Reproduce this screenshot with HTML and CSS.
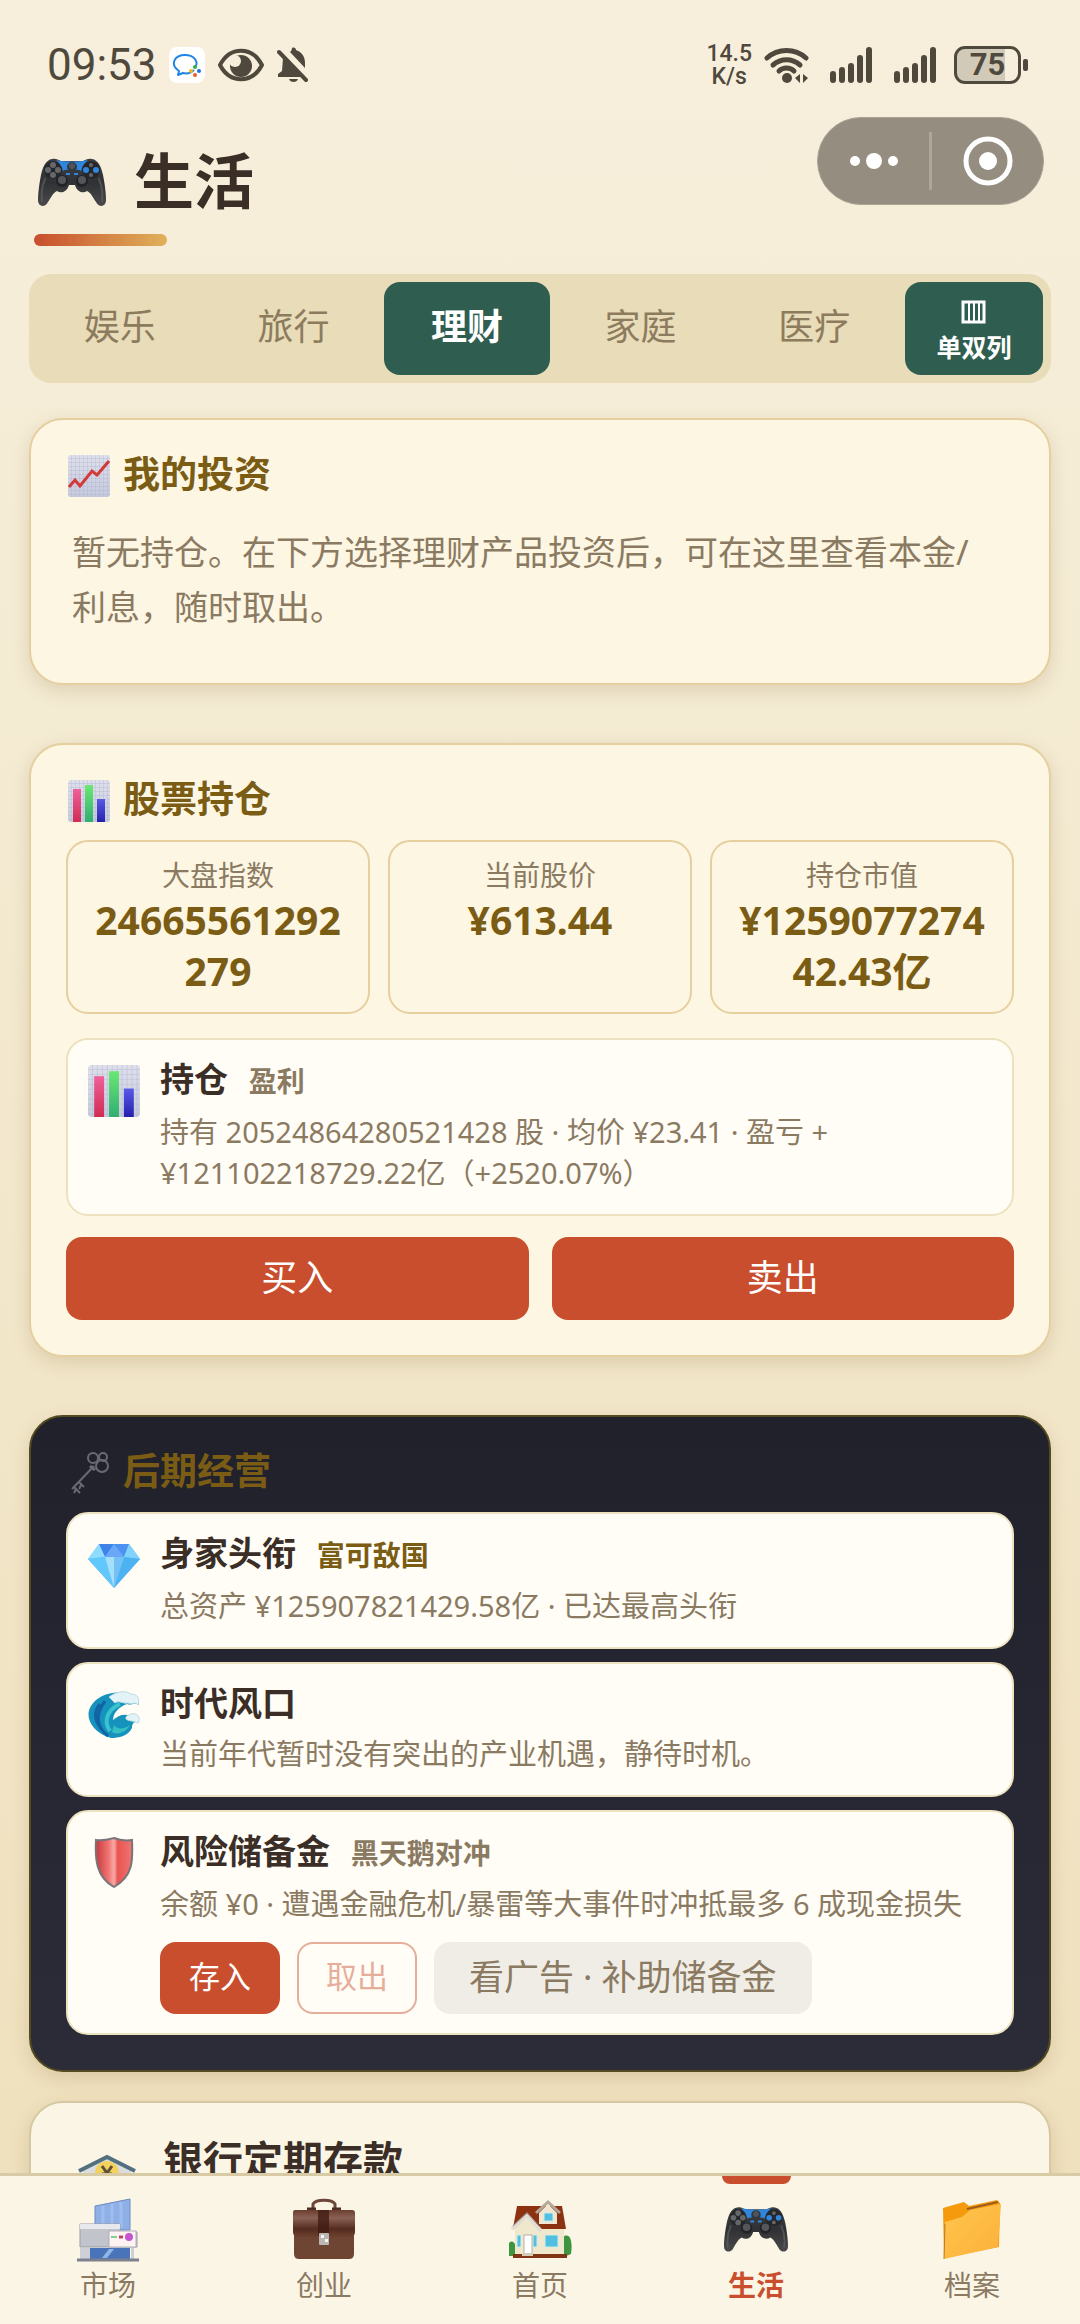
FILE: index.html
```
<!DOCTYPE html>
<html lang="zh-CN">
<head>
  <meta charset="UTF-8" />
  <meta name="viewport" content="width=device-width, initial-scale=1" />
  <title>生活</title>
  <link rel="stylesheet" href="styles.css">
</head>
<body>
  <!-- shared icons -->
  <svg class="sprite" aria-hidden="true">
    <defs>
      <linearGradient id="pad-body" x1="0" y1="0" x2="0" y2="1">
        <stop offset="0" stop-color="#3c3f44" /><stop offset=".5" stop-color="#303134" /><stop offset="1" stop-color="#4a4a4b" />
      </linearGradient>
      <linearGradient id="bar-pink" x1="0" y1="0" x2="0" y2="1">
        <stop offset="0" stop-color="#f0609a" /><stop offset="1" stop-color="#cf2c52" />
      </linearGradient>
      <linearGradient id="bar-green" x1="0" y1="0" x2="0" y2="1">
        <stop offset="0" stop-color="#6be873" /><stop offset="1" stop-color="#2fae72" />
      </linearGradient>
      <linearGradient id="bar-blue" x1="0" y1="0" x2="0" y2="1">
        <stop offset="0" stop-color="#5a5ae8" /><stop offset="1" stop-color="#2420ac" />
      </linearGradient>
      <linearGradient id="paper-fill" x1="0" y1="0" x2="0" y2="1">
        <stop offset="0" stop-color="#dfe0ea" /><stop offset="1" stop-color="#c6cadd" />
      </linearGradient>
      <pattern id="paper-grid" width="4" height="4" patternUnits="userSpaceOnUse">
        <path d="M4 0V4M0 4H4" stroke="#a9b1cf" stroke-width="1" fill="none" />
      </pattern>
    </defs>
    <symbol id="icon-gamepad" viewBox="0 0 68 50">
      <path d="M14 1C18 0 20 2 23 3H45C48 2 50 0 54 1C60 2 63 8 65 17C67 27 68 36 68 42C68 49 61 50 58 44C54 38 53 35 49 33C45 36 39 34 37 27H31C29 34 23 36 19 33C15 35 14 38 10 44C7 50 0 49 0 42C0 36 1 27 3 17C5 8 8 2 14 1Z" fill="url(#pad-body)" />
      <path d="M18 2C27 4 41 4 50 2C46 6 44 9 43 13C40 11 37 12 34 13C31 12 28 11 25 13C24 9 22 6 18 2Z" fill="#2f86dc" />
      <circle cx="34" cy="9" r="5" fill="#33383f" /><circle cx="34" cy="8" r="3" fill="#50555d" />
      <path d="M28 15h4v2h-4zM36 15h4v2h-4z" fill="#2f86dc" />
      <circle cx="15" cy="12" r="9" fill="#25272a" /><circle cx="53" cy="12" r="9" fill="#25272a" />
      <g fill="#66676a"><circle cx="15" cy="7" r="3" /><circle cx="10" cy="12" r="3" /><circle cx="20" cy="12" r="3" /><circle cx="15" cy="17" r="3" /><circle cx="53" cy="7" r="2" /><circle cx="53" cy="17" r="2" /></g>
      <g fill="#2f86dc"><circle cx="48" cy="12" r="3" /><circle cx="58" cy="12" r="3" /></g>
      <circle cx="24" cy="23" r="6" fill="#222326" /><circle cx="24" cy="22" r="4" fill="#54565a" />
      <circle cx="44" cy="23" r="6" fill="#222326" /><circle cx="44" cy="22" r="4" fill="#54565a" />
      <path d="M7 21C4 28 3 36 4 43M61 21C64 28 65 36 64 43" stroke="#5e5f61" stroke-width="2" fill="none" stroke-linecap="round" opacity=".7" />
    </symbol>
    <symbol id="icon-bars" viewBox="0 0 42 42">
      <rect width="42" height="42" rx="3" fill="url(#paper-fill)" />
      <rect width="42" height="42" rx="3" fill="url(#paper-grid)" opacity=".7" />
      <rect x="5" y="9" width="8" height="33" fill="url(#bar-pink)" />
      <rect x="17" y="5" width="8" height="37" fill="url(#bar-green)" />
      <rect x="29" y="19" width="8" height="23" fill="url(#bar-blue)" />
    </symbol>
    <symbol id="icon-signal" viewBox="0 0 52 36">
      <path d="M11 27V33M20 23V33M29 19V33M38 11V33M47 3V33" stroke="#4f483d" stroke-width="6" stroke-linecap="round" />
    </symbol>
  </svg>

  <div class="status-bar">
    <div class="status-group">
      <span class="clock">09:53</span>
      <svg width="36" height="36" viewBox="0 0 36 36">
        <rect width="36" height="36" rx="8" fill="#fff" />
        <path d="M25 23C22 26 18 27 14 26L9 28L10 24C0 17 6 8 16 8C25 8 29 14 27 19" fill="none" stroke="#1f86e8" stroke-width="2" stroke-linejoin="round" />
        <circle cx="26" cy="20" r="2" fill="#2bb24a" /><circle cx="30" cy="24" r="2" fill="#1f6fe0" /><circle cx="26" cy="28" r="2" fill="#ee5a2c" /><circle cx="22" cy="24" r="2" fill="#f7b51c" />
      </svg>
      <svg width="48" height="34" viewBox="0 0 48 34">
        <path d="M3 17C13-2 35-2 45 17C35 36 13 36 3 17Z" fill="none" stroke="#4f483d" stroke-width="4" stroke-linejoin="round" />
        <circle cx="24" cy="18" r="11" fill="#4f483d" /><circle cx="18" cy="13" r="6" fill="#f6eedb" />
      </svg>
      <svg width="32" height="36" viewBox="0 0 32 36">
        <path d="M13 5C14 4 15 3 15 1C17 0 19 1 19 3C25 5 28 10 28 16V21Z" fill="#4f483d" />
        <path d="M6 11L24 30H1V27L5 24Z" fill="#4f483d" />
        <path d="M2 5L29 33" stroke="#4f483d" stroke-width="4" stroke-linecap="round" />
        <path d="M12 32H21C20 36 13 36 12 32Z" fill="#4f483d" />
      </svg>
    </div>
    <div class="status-group">
      <div class="speed"><span>14.5</span><span>K/s</span></div>
      <svg width="46" height="36" viewBox="0 0 46 36">
        <g fill="none" stroke="#4f483d" stroke-width="5" stroke-linecap="round">
          <path d="M3 11C14 1 31 1 42 11" /><path d="M9 18C17 11 28 11 36 18" /><path d="M15 24C19 20 26 20 30 24" />
        </g>
        <circle cx="23" cy="31" r="5" fill="#4f483d" />
        <path d="M36 27V36L31 31ZM39 27V36L44 31Z" fill="#4f483d" />
      </svg>
      <svg width="52" height="36"><use href="#icon-signal" /></svg>
      <svg width="52" height="36"><use href="#icon-signal" /></svg>
      <div class="battery"><span>75</span></div>
    </div>
  </div>

  <header class="page-header">
    <div>
      <h1><svg width="68" height="50"><use href="#icon-gamepad" /></svg>生活</h1>
      <div class="title-line"></div>
    </div>
    <div class="capsule">
      <button aria-label="更多">
        <svg width="50" height="18" viewBox="0 0 50 18"><g fill="#fff"><circle cx="6" cy="9" r="5" /><circle cx="25" cy="9" r="8" /><circle cx="44" cy="9" r="5" /></g></svg>
      </button>
      <button aria-label="关闭">
        <svg width="50" height="50" viewBox="0 0 50 50"><circle cx="25" cy="25" r="22" fill="none" stroke="#fff" stroke-width="5" /><circle cx="25" cy="25" r="9" fill="#fff" /></svg>
      </button>
    </div>
  </header>

  <div class="tabs">
    <button class="tab">娱乐</button>
    <button class="tab">旅行</button>
    <button class="tab active">理财</button>
    <button class="tab">家庭</button>
    <button class="tab">医疗</button>
    <button class="column-toggle">
      <svg width="25" height="24" viewBox="0 0 25 24"><path d="M2 2H23V22H2Z" fill="none" stroke="#fff" stroke-width="3" /><path d="M8 2V22M13 2V22M18 2V22" stroke="#fff" stroke-width="2" /></svg>
      单双列
    </button>
  </div>

  <main>
    <section class="card">
      <h2>
        <svg width="42" height="42" viewBox="0 0 42 42">
          <rect width="42" height="42" rx="3" fill="url(#paper-fill)" />
          <rect width="42" height="42" rx="3" fill="url(#paper-grid)" opacity=".7" />
          <path d="M1 32L7 25L12 31L24 16L29 20L41 6" fill="none" stroke="#d23a3a" stroke-width="3" />
        </svg>
        我的投资
      </h2>
      <p class="empty">暂无持仓。在下方选择理财产品投资后，可在这里查看本金/<br>利息，随时取出。</p>
    </section>

    <section class="card">
      <h2><svg width="42" height="42"><use href="#icon-bars" /></svg>股票持仓</h2>
      <div class="stats">
        <div class="stat"><div class="stat-label">大盘指数</div><div class="stat-value">24665561292279</div></div>
        <div class="stat"><div class="stat-label">当前股价</div><div class="stat-value">¥613.44</div></div>
        <div class="stat"><div class="stat-label">持仓市值</div><div class="stat-value">¥125907727442.43亿</div></div>
      </div>
      <div class="item">
        <svg class="item-icon" width="52" height="52"><use href="#icon-bars" /></svg>
        <div class="item-body">
          <h3>持仓 <span class="tag">盈利</span></h3>
          <p>持有 20524864280521428 股 · 均价 ¥23.41 · 盈亏 +<wbr>¥121102218729.22亿（+2520.07%）</p>
        </div>
      </div>
      <div class="trade">
        <button class="btn">买入</button>
        <button class="btn">卖出</button>
      </div>
    </section>

    <section class="card dark">
      <h2>
        <svg width="42" height="42" viewBox="0 0 42 42">
          <g fill="none" stroke="#686a75" stroke-width="2">
            <circle cx="25" cy="6" r="5" /><circle cx="35" cy="5" r="4" /><circle cx="34" cy="14" r="6" />
            <path d="M26 14L4 37M11 30L16 35M6 35L12 41M13 33L11 37M8 37L6 41" /><path d="M22 14L27 18" stroke-width="3" />
          </g>
        </svg>
        后期经营
      </h2>
      <div class="items">
        <div class="item">
          <svg class="item-icon" width="52" height="52" viewBox="0 0 52 52">
            <path d="M11 5H41L52 20L26 49L0 20Z" fill="#59b5f6" />
            <path d="M11 5L17 18L26 5Z" fill="#3f83e8" /><path d="M26 5L17 18H36Z" fill="#6aa8f7" /><path d="M26 5H41L36 18Z" fill="#4c92ee" />
            <path d="M11 5L0 20L17 18Z" fill="#8edcff" /><path d="M41 5L52 20L36 18Z" fill="#82d3fb" />
            <path d="M0 20L17 18L26 49Z" fill="#62c8fb" /><path d="M17 18H36L26 49Z" fill="#a4dffb" /><path d="M26 18H36L26 49Z" fill="#74c2f5" /><path d="M36 18L52 20L26 49Z" fill="#4db2f2" />
          </svg>
          <div class="item-body">
            <h3>身家头衔 <span class="tag gold">富可敌国</span></h3>
            <p>总资产 ¥125907821429.58亿 · 已达最高头衔</p>
          </div>
        </div>
        <div class="item">
          <svg class="item-icon" width="52" height="52" viewBox="0 0 52 52">
            <path d="M23 49C4 44-4 28 3 17C10 5 29 0 42 6C49 6 51 10 51 16C46 13 43 17 39 15C30 18 25 25 25 31C30 26 37 24 45 28C50 27 52 31 50 34C46 31 44 35 44 39C40 47 31 49 23 49Z" fill="#1593bd" />
            <path d="M21 8C30 1 40 2 42 5C50 5 52 9 50 16C47 12 44 16 40 14C35 15 31 11 27 14Z" fill="#e4f3f7" stroke="#bddbe5" />
            <path d="M26 31C31 22 35 17 42 16L50 18L49 27L40 25C34 25 29 27 26 31Z" fill="#fffdf6" />
            <path d="M38 28C43 23 50 24 51 29C52 31 50 34 49 34C46 31 41 33 38 30Z" fill="#e4f3f7" stroke="#bddbe5" />
            <path d="M20 47C9 38 6 27 17 12M14 41C5 30 6 22 12 15" fill="none" stroke="#1263a4" stroke-width="3" />
            <path d="M22 42C15 32 19 21 32 15" fill="none" stroke="#38c3cf" stroke-width="4" />
            <path d="M24 43C30 47 39 42 42 36C37 40 29 41 26 36Z" fill="#36bfc3" />
          </svg>
          <div class="item-body">
            <h3>时代风口</h3>
            <p>当前年代暂时没有突出的产业机遇，静待时机。</p>
          </div>
        </div>
        <div class="item">
          <svg class="item-icon" width="52" height="52" viewBox="0 0 52 52">
            <defs>
              <linearGradient id="shield-fill"><stop offset="0" stop-color="#c9383b" /><stop offset=".35" stop-color="#ef7473" /><stop offset=".5" stop-color="#f9aaa5" /><stop offset=".6" stop-color="#ea5451" /><stop offset="1" stop-color="#ec7673" /></linearGradient>
            </defs>
            <path d="M8 3C16 4 22 2 26 1C31 3 37 4 44 3C45 24 45 39 26 50C8 40 7 22 8 3Z" fill="url(#shield-fill)" stroke="#77757a" stroke-width="2" />
          </svg>
          <div class="item-body">
            <h3>风险储备金 <span class="tag">黑天鹅对冲</span></h3>
            <p>余额 ¥0 · 遭遇金融危机/暴雷等大事件时冲抵最多 6 成现金损失</p>
            <div class="actions">
              <button class="btn small">存入</button>
              <button class="btn small outline" disabled>取出</button>
              <button class="btn ad">看广告 · 补助储备金</button>
            </div>
          </div>
        </div>
      </div>
    </section>

    <section class="card product">
      <svg width="60" height="60" viewBox="0 0 60 60">
        <path d="M6 17L30 5L54 17V56H6Z" fill="#d9dde0" />
        <circle cx="30" cy="19" r="12" fill="#f3d15c" />
        <path d="M25 12L30 19L35 12M30 19V27M25 20H35" fill="none" stroke="#5c5137" stroke-width="3" />
        <path d="M2 17L30 3L58 17" fill="none" stroke="#53707f" stroke-width="4" />
      </svg>
      <h3>银行定期存款</h3>
    </section>
  </main>

  <nav class="bottom-nav">
    <a href="#market">
      <svg width="64" height="64" viewBox="0 0 64 64">
        <path d="M19 8L54 1V32H19Z" fill="#8fb0e6" stroke="#6d8cc4" />
        <path d="M27 8V30M36 6V30M45 4V30" stroke="#a0bdf0" stroke-width="3" />
        <path d="M4 26H44V34H61V49H4Z" fill="#c2c4cc" stroke="#9b9da8" />
        <path d="M4 26H44V31H4Z" fill="#e7e8ee" />
        <rect x="33" y="33" width="27" height="16" fill="#fff3f2" stroke="#aeb0ba" />
        <path d="M35 39H41" stroke="#7bd192" stroke-width="2" /><path d="M43 39H47" stroke="#c6425f" stroke-width="3" /><circle cx="53" cy="39" r="4" fill="#c655d1" />
        <path d="M4 50H14V61H4ZM55 50H58V61H55Z" fill="#cfd0d7" /><rect x="14" y="50" width="40" height="11" fill="#4a74ba" />
        <path d="M26 60L33 51H38L31 60Z" fill="#8fb6e6" /><path d="M1 62H63" stroke="#7c818d" stroke-width="3" />
      </svg>
      市场
    </a>
    <a href="#startup">
      <svg width="64" height="64" viewBox="0 0 64 64">
        <defs><linearGradient id="case-fill" x1="0" y1="0" x2="0" y2="1"><stop offset="0" stop-color="#6b3f32" /><stop offset=".3" stop-color="#8a6254" /><stop offset=".7" stop-color="#542b20" /><stop offset="1" stop-color="#6d412f" /></linearGradient></defs>
        <path d="M21 11V6C24 1 40 1 43 6V11" fill="none" stroke="#6d4637" stroke-width="3" />
        <path d="M15 11H24M40 11H49" stroke="#4e2c21" stroke-width="3" />
        <path d="M2 36H62V55C62 60 60 61 56 61H8C4 61 2 60 2 55Z" fill="#6e4433" />
        <path d="M1 15C1 12 2 12 4 12H60C62 12 63 13 63 15V34C63 38 60 39 57 39H7C4 39 1 38 1 34Z" fill="url(#case-fill)" />
        <rect x="26" y="12" width="11" height="26" fill="#411b13" opacity=".8" /><rect x="27" y="35" width="10" height="12" rx="1" fill="#b9b6b4" /><path d="M29 37h3v3h-3zM33 41h3v3h-3z" fill="#f6f4f1" />
      </svg>
      创业
    </a>
    <a href="#home">
      <svg width="64" height="64" viewBox="0 0 64 64">
        <path d="M1 45C5 41 9 45 8 58H1ZM55 39C62 34 65 43 63 56L56 59Z" fill="#3f9440" />
        <path d="M7 28L20 14H56V58H7Z" fill="#f0e8cd" />
        <path d="M9 8H54L58 31H31L19 18L5 30Z" fill="#8c3211" />
        <path d="M4 31L19 17L33 33" fill="none" stroke="#e3ddd2" stroke-width="4" /><path d="M5 28L19 15L32 29" fill="none" stroke="#8f8477" stroke-width="1" />
        <path d="M31 26V15L40 6L49 15V26Z" fill="#efe7d2" /><path d="M28 15L40 4L52 15" fill="none" stroke="#b4a999" stroke-width="3" />
        <path d="M36 15H45V23H36ZM37 37H50V49H37ZM9 37H13V49H9ZM25 37H29V49H25Z" fill="#51bfe2" stroke="#d3ebe8" />
        <rect x="16" y="37" width="8" height="20" fill="#fff" stroke="#b8aea1" /><path d="M5 56H59V60H5Z" fill="#813414" /><path d="M14 55H25V58H14Z" fill="#d6cab8" />
      </svg>
      首页
    </a>
    <a href="#life" class="active">
      <svg width="64" height="64"><use href="#icon-gamepad" /></svg>
      生活
    </a>
    <a href="#archive">
      <svg width="64" height="64" viewBox="0 0 64 64">
        <defs><linearGradient id="folder-fill" x1="0" y1="0" x2="1" y2="1"><stop offset="0" stop-color="#ffc64d" /><stop offset="1" stop-color="#fcb03a" /></linearGradient></defs>
        <path d="M3 10L24 4L29 8L57 2L60 5L59 49L4 60Z" fill="#f59a0c" /><path d="M27 11L58 4" stroke="#9a5d1d" stroke-width="2" />
        <path d="M5 24L22 19L30 12L61 6L58 49L4 61Z" fill="url(#folder-fill)" /><path d="M4 61L5 26" stroke="#c27a1c" stroke-width="1" />
      </svg>
      档案
    </a>
  </nav>
</body>
</html>
```
FILE: styles.css
```
* {
  box-sizing: border-box;
}
body {
  margin: 0;
  height: 100vh;
  display: flex;
  flex-direction: column;
  overflow: hidden;
  font-family: "Noto Sans", "Noto Sans CJK SC", sans-serif;
  color: #3a2e26;
  background: linear-gradient(180deg, #f7efdc, #f4ebd3 30%, #efdfbb);
}
h1, h2, h3, p {
  margin: 0;
}
button {
  font-family: inherit;
  border: none;
  padding: 0;
  cursor: pointer;
}
svg {
  display: block;
  flex-shrink: 0;
}
.sprite {
  position: absolute;
  width: 0;
  height: 0;
}

/* status bar */
.status-bar {
  display: flex;
  justify-content: space-between;
  padding: 44px 52px 31px 47px;
  color: #4f483d;
  font-family: Roboto, sans-serif;
}
.status-group {
  display: flex;
  align-items: center;
  gap: 12px;
  height: 42px;
}
.clock {
  font-size: 44px;
  line-height: 40px;
}
.speed {
  display: flex;
  flex-direction: column;
  align-items: center;
  font-size: 23px;
  font-weight: 500;
  line-height: 23px;
}
.battery {
  position: relative;
  width: 67px;
  height: 38px;
  margin: 0 7px 0 4px;
  border: 3px solid #4f483d;
  border-radius: 11px;
  background: linear-gradient(90deg, #d2cab8 78%, transparent 78%);
  font-size: 31px;
  font-weight: 700;
  line-height: 32px;
  text-align: center;
}
.battery::after {
  content: "";
  position: absolute;
  top: 10px;
  right: -10px;
  width: 5px;
  height: 12px;
  border-radius: 2px;
  background: #4f483d;
}

/* header */
.page-header {
  display: flex;
  justify-content: space-between;
  align-items: flex-start;
  padding: 0 36px 28px 34px;
}
h1 {
  display: flex;
  align-items: center;
  gap: 28px;
  padding: 29px 0 0 4px;
  font-size: 60px;
  line-height: 70px;
}
h1 svg {
  margin-top: 4px;
}
.title-line {
  width: 133px;
  height: 12px;
  margin-top: 18px;
  border-radius: 6px;
  background: linear-gradient(90deg, #c84e2d, #e0b15a);
}
.capsule {
  display: flex;
  align-items: center;
  width: 227px;
  height: 88px;
  border: 1px solid #aaa394;
  border-radius: 44px;
  background: #958e80;
}
.capsule button {
  flex: 1;
  display: flex;
  align-items: center;
  justify-content: center;
  height: 58px;
  background: none;
}
.capsule button + button {
  border-left: 3px solid #aea798;
}

/* tabs */
.tabs {
  display: flex;
  gap: 8px;
  margin: 0 29px;
  padding: 8px;
  border-radius: 22px;
  background: #e8dcb9;
}
.tab {
  flex: 1;
  height: 93px;
  padding-bottom: 8px;
  border-radius: 16px;
  background: none;
  color: #8d7b5e;
  font-size: 36px;
}
.tab.active {
  background: #2f5d50;
  color: #fff;
  font-weight: 700;
}
.column-toggle {
  display: flex;
  flex-direction: column;
  align-items: center;
  justify-content: center;
  gap: 7px;
  width: 138px;
  padding-top: 6px;
  border-radius: 16px;
  background: #2f5d50;
  color: #fff;
  font-size: 25px;
  font-weight: 700;
  line-height: 32px;
}

/* cards */
main {
  flex: 1;
  min-height: 0;
  overflow-y: auto;
  scrollbar-width: none;
  padding: 35px 29px 0;
}
.card {
  margin-bottom: 58px;
  padding: 35px;
  border: 2px solid #e6cf9f;
  border-radius: 34px;
  background: #fdf6e3;
  box-shadow: 0 6px 18px rgba(120, 95, 40, 0.18);
}
h2 {
  display: flex;
  align-items: flex-start;
  gap: 13px;
  height: 40px;
  padding-left: 2px;
  color: #7a5c14;
  font-size: 37px;
  line-height: 38px;
}
.empty {
  padding: 30px 6px 13px;
  color: #8b7a62;
  font-size: 34px;
  line-height: 55px;
}
.stats {
  display: grid;
  grid-template-columns: repeat(3, 1fr);
  gap: 18px;
  margin: 20px 0 24px;
}
.stat {
  padding: 14px 24px 16px;
  border: 2px solid #e6cf9f;
  border-radius: 22px;
  text-align: center;
}
.stat-label {
  color: #8b7a62;
  font-size: 28px;
  line-height: 38px;
}
.stat-value {
  color: #7a5c14;
  font-size: 39px;
  font-weight: 700;
  line-height: 51px;
  word-break: break-all;
}
.item {
  display: flex;
  gap: 20px;
  padding: 19px 20px;
  border: 2px solid #ece2c0;
  border-radius: 22px;
  background: #fffdf6;
}
.item-icon {
  margin-top: 6px;
}
.item-body {
  flex: 1;
}
h3 {
  margin-bottom: 10px;
  font-size: 34px;
  line-height: 40px;
}
.tag {
  margin-left: 12px;
  color: #8b7a62;
  font-size: 28px;
}
.tag.gold {
  color: #7a5c14;
}
.item p {
  margin-bottom: 2px;
  color: #8b7a62;
  font-size: 29px;
  line-height: 41px;
}
.trade {
  display: flex;
  gap: 23px;
  margin-top: 21px;
}
.btn {
  height: 83px;
  padding-bottom: 7px;
  border-radius: 16px;
  background: #c84e2d;
  color: #fff;
  font-size: 36px;
}
.trade .btn {
  flex: 1;
}
.dark {
  margin-bottom: 29px;
  border-color: #544a20;
  background: linear-gradient(180deg, #20212b, #2b2c38);
}
.items {
  display: flex;
  flex-direction: column;
  gap: 13px;
  margin-top: 20px;
}
.actions {
  display: flex;
  gap: 17px;
  margin-top: 18px;
}
.actions .btn {
  height: 72px;
}
.btn.small {
  width: 120px;
  font-size: 31px;
}
.btn.outline {
  border: 2px solid #c84e2d;
  background: none;
  color: #c84e2d;
  opacity: 0.45;
}
.btn.ad {
  padding: 0 35px 7px;
  background: #f0ede6;
  color: #8b7a62;
  font-size: 35px;
}
.product {
  display: flex;
  align-items: center;
  gap: 26px;
  padding: 35px 46px;
  border-color: #d5c8a3;
  background: #fbf5e6;
}
.product svg {
  margin-top: 16px;
}
.product h3 {
  margin: 0 0 32px;
  font-size: 40px;
}

/* bottom nav */
.bottom-nav {
  display: flex;
  height: 151px;
  border-top: 3px solid #d8caa4;
  background: #fbf5e6;
}
.bottom-nav a {
  flex: 1;
  position: relative;
  display: flex;
  flex-direction: column;
  align-items: center;
  gap: 3px;
  padding-top: 22px;
  color: #8b7a62;
  font-size: 28px;
  line-height: 40px;
  text-decoration: none;
}
.bottom-nav .active {
  color: #c84e2d;
  font-weight: 700;
}
.bottom-nav .active::before {
  content: "";
  position: absolute;
  top: 0;
  width: 69px;
  height: 8px;
  border-radius: 0 0 8px 8px;
  background: #c84e2d;
}
```
